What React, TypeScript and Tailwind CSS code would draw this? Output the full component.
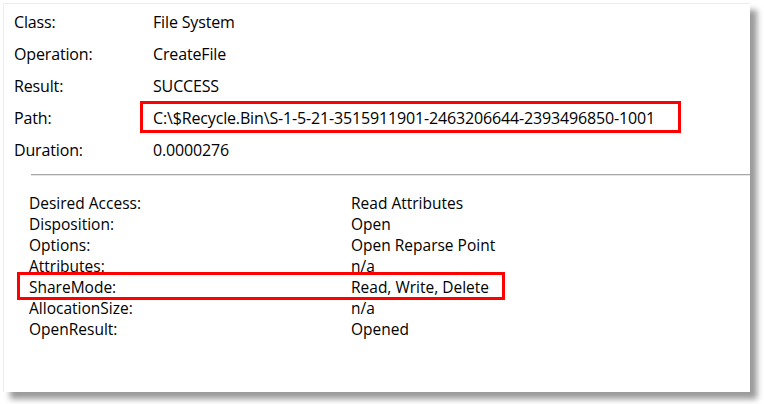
const top = [
  ['Class:', 'File System'],
  ['Operation:', 'CreateFile'],
  ['Result:', 'SUCCESS'],
  ['Path:', 'C:\\$Recycle.Bin\\S-1-5-21-3515911901-2463206644-2393496850-1001'],
  ['Duration:', '0.0000276'],
]

const details = [
  ['Desired Access:', 'Read Attributes'],
  ['Disposition:', 'Open'],
  ['Options:', 'Open Reparse Point'],
  ['Attributes:', 'n/a'],
  ['ShareMode:', 'Read, Write, Delete'],
  ['AllocationSize:', 'n/a'],
  ['OpenResult:', 'Opened'],
]

export default function App() {
  return (
    <div className="w-[764px] h-[404px] bg-white overflow-hidden" style={{ fontFamily: '"Open Sans", "Noto Sans", sans-serif' }}>
      <div className="ml-[3px] mt-[3px] w-[747px] h-[389px] bg-white border-l border-t border-[#ececec] shadow-[7px_7px_6px_rgba(0,0,0,0.4)] text-black">
        {/* event properties */}
        <div className="pt-[2px] pl-[10px] text-[16px] tracking-[-0.15px]">
          {top.map(([label, value]) => (
            <div key={label} className="relative flex h-[32px] items-center">
              <span className="w-[139px] shrink-0">{label}</span>
              <span>{value}</span>
              {label === 'Path:' && (
                <span className="absolute left-[126px] -top-[1px] w-[541px] h-[32px] border-[3px] border-[#f00]" />
              )}
            </div>
          ))}
        </div>

        <div className="ml-[27px] mt-[8px] h-[2px] border-t border-[#a8a8a8] border-b border-b-[#e6e6e6]" />

        {/* details */}
        <div className="pt-[17px] pl-[25px] text-[15.5px] leading-[21px]">
          {details.map(([label, value]) => (
            <div key={label} className="relative flex h-[21px] items-center">
              <span className="w-[322px] shrink-0">{label}</span>
              <span>{value}</span>
              {label === 'ShareMode:' && (
                <span className="absolute -left-[12px] -top-[5px] w-[488px] h-[28px] border-[3px] border-[#f00]" />
              )}
            </div>
          ))}
        </div>
      </div>
    </div>
  )
}
